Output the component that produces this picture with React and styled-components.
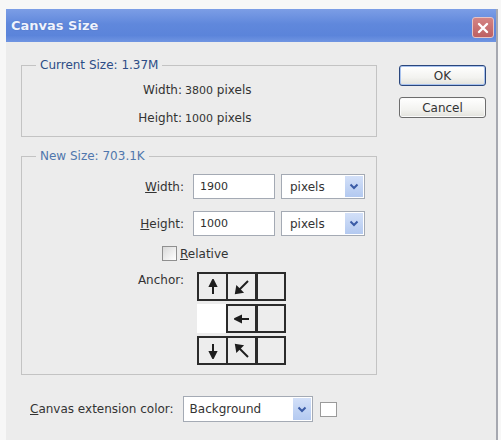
import React from "react";
import styled, { createGlobalStyle } from "styled-components";

const GlobalStyle = createGlobalStyle`
  * { box-sizing: border-box; }
  html, body { margin: 0; padding: 0; background: #f7f7f7; }
  body {
    font-family: "DejaVu Sans", "Liberation Sans", sans-serif;
    font-size: 12px;
    color: #333333;
  }
`;

const Page = styled.div`
  width: 501px;
  height: 440px;
  overflow: hidden;
  padding: 9px 0 0 6px;
  background: #f7f7f7;
`;

const Window = styled.div`
  width: 492px;
  height: 431px;
  display: flex;
  flex-direction: column;
  border-right: 2px solid #a6a8b0;
  background: #ececec;
`;

const TitleBar = styled.div`
  height: 33px;
  flex: none;
  display: flex;
  align-items: flex-start;
  justify-content: space-between;
  padding: 0 2px 0 5px;
  background: linear-gradient(#7c9ee6, #6088dc 45%, #5b84da 80%, #7095e2);
`;

const Title = styled.span`
  font: bold 13px/33px "DejaVu Sans", sans-serif;
  color: #eef3ff;
  text-shadow: 0 0 1px rgba(40, 60, 120, 0.5);
`;

const CloseButton = styled.button`
  margin-top: 8px;
  width: 22px;
  height: 21px;
  padding: 0;
  border: 1px solid #e7c3c3;
  border-radius: 3px;
  background: linear-gradient(#d48484, #bd6062);
  display: grid;
  place-items: center;
`;

const Body = styled.div`
  flex: 1;
  display: flex;
  align-items: flex-start;
  gap: 22px;
  padding: 15px 0 0 15px;
`;

const Main = styled.div`
  width: 356px;
  display: flex;
  flex-direction: column;
`;

const Group = styled.fieldset`
  margin: ${(p) => p.$mt || 0}px 0 0;
  padding: ${(p) => p.$pad};
  min-width: 0;
  border: 1px solid #c3c3c3;
`;

const Legend = styled.legend`
  margin-left: 14px;
  padding: 0 4px;
  line-height: 16px;
  font-size: 12px;
  color: ${(p) => (p.$tone === "light" ? "#5077ad" : "#2d4c86")};
`;

const InfoGrid = styled.div`
  display: grid;
  grid-template-columns: 160px auto;
  column-gap: 3px;
  grid-auto-rows: 28px;
  align-items: center;
`;

const Label = styled.span`
  text-align: right;
  white-space: nowrap;
`;

const Value = styled.span`
  white-space: nowrap;
`;

const Number = styled.span`
  font-size: 11px;
`;

const FormRow = styled.div`
  display: flex;
  align-items: ${(p) => p.$align || "center"};
  gap: ${(p) => (p.$gap != null ? p.$gap : 9)}px;
  margin-top: ${(p) => p.$mt || 0}px;
  padding-left: ${(p) => p.$pl || 0}px;
`;

const FieldLabel = styled.label`
  width: 162px;
  flex: none;
  text-align: right;
  line-height: 16px;
  white-space: nowrap;
`;

const Mnemonic = styled.span`
  text-decoration: underline;
`;

const TextInput = styled.input`
  width: 82px;
  height: 25px;
  border: 1px solid #a4aab4;
  background: #fff;
  padding: 0 0 0 6px;
  margin: 0;
  font: 11px "DejaVu Sans", sans-serif;
  color: #2e2e2e;
  outline: none;
`;

const Select = styled.div`
  width: ${(p) => p.$w}px;
  height: ${(p) => p.$h}px;
  margin-left: ${(p) => p.$ml || 0}px;
  border: 1px solid #a4aab4;
  background: #fff;
  display: flex;
  align-items: stretch;
  flex: none;
`;

const SelectText = styled.span`
  flex: 1;
  display: flex;
  align-items: center;
  padding-left: ${(p) => p.$pl || 8}px;
`;

const SelectArrow = styled.span`
  width: 18px;
  margin: 1px;
  background: linear-gradient(#d3e0f8, #b3c9f0);
  display: grid;
  place-items: center;
`;

const CheckBox = styled.span`
  width: 15px;
  height: 15px;
  flex: none;
  border: 1px solid #8f8f8f;
  background: linear-gradient(135deg, #d9d9d9, #ffffff);
`;

const AnchorGrid = styled.div`
  margin-left: 4px;
  display: flex;
  flex-direction: column;
  gap: 3px;
`;

const AnchorRow = styled.div`
  display: flex;
`;

const AnchorCell = styled.div`
  width: 31px;
  height: 29px;
  display: grid;
  place-items: center;
  border: 2px solid ${(p) => (p.$selected ? "transparent" : "#2b2b2b")};
  border-left-width: ${(p) => (p.$thick ? 3 : 2)}px;
  background: ${(p) => (p.$selected ? "#ffffff" : "#ededed")};
  & + & {
    margin-left: -2px;
  }
`;

const ExtensionRow = styled.div`
  margin-top: 21px;
  padding-left: 9px;
  display: flex;
  align-items: center;
`;

const Swatch = styled.span`
  width: 17px;
  height: 15px;
  margin-left: 7px;
  border: 1px solid #9a9a9a;
  background: #fff;
`;

const Actions = styled.div`
  margin-top: 8px;
  width: 87px;
  display: flex;
  flex-direction: column;
  gap: 11px;
`;

const Button = styled.button`
  height: 21px;
  padding: 0;
  font: 12px "DejaVu Sans", sans-serif;
  color: #333;
  border-radius: 3px;
  border: 1px solid ${(p) => (p.$primary ? "#2a467c" : "#6d6d6d")};
  background: linear-gradient(#ffffff, #f3f3f0 60%, #e2e2dc);
  box-shadow: ${(p) =>
    p.$primary ? "inset 0 0 0 1px #a8c2ee" : "inset 0 0 0 1px #fafafa"};
`;

const arrows = {
  up: (
    <>
      <line x1="8" y1="15" x2="8" y2="5" />
      <polygon points="8,1 5,7 11,7" />
    </>
  ),
  down: (
    <>
      <line x1="8" y1="1" x2="8" y2="11" />
      <polygon points="8,15 5,9 11,9" />
    </>
  ),
  left: (
    <>
      <line x1="15" y1="8" x2="5" y2="8" />
      <polygon points="1,8 7,5 7,11" />
    </>
  ),
  downLeft: (
    <>
      <line x1="14" y1="2" x2="5" y2="11" />
      <polygon points="2,14 3,8 8,13" />
    </>
  ),
  upLeft: (
    <>
      <line x1="14" y1="14" x2="5" y2="5" />
      <polygon points="2,2 8,3 3,8" />
    </>
  ),
};

function Arrow({ dir }) {
  return (
    <svg width="16" height="16" viewBox="0 0 16 16" stroke="#1e1e1e" strokeWidth="2" fill="#1e1e1e">
      {arrows[dir]}
    </svg>
  );
}

function Chevron() {
  return (
    <svg width="10" height="7" viewBox="0 0 10 7">
      <path d="M1.5 1.5 L5 5 L8.5 1.5" fill="none" stroke="#3a5ba6" strokeWidth="2" />
    </svg>
  );
}

const anchorLayout = [
  [{ dir: "up" }, { dir: "downLeft" }, { thick: true }],
  [{ selected: true }, { dir: "left" }, { thick: true }],
  [{ dir: "down" }, { dir: "upLeft" }, { thick: true }],
];

function UnitSelect() {
  return (
    <Select $w={84} $h={25} $ml={-3}>
      <SelectText>pixels</SelectText>
      <SelectArrow>
        <Chevron />
      </SelectArrow>
    </Select>
  );
}

export default function App() {
  return (
    <>
      <GlobalStyle />
      <Page>
        <Window>
          <TitleBar>
            <Title>Canvas Size</Title>
            <CloseButton aria-label="Close">
              <svg width="12" height="12" viewBox="0 0 12 12">
                <path d="M2 2 L10 10 M10 2 L2 10" stroke="#fff" strokeWidth="2.4" strokeLinecap="round" />
              </svg>
            </CloseButton>
          </TitleBar>
          <Body>
            <Main>
              <Group $pad="3px 0 4px">
                <Legend>Current Size: 1.37M</Legend>
                <InfoGrid>
                  <Label>Width:</Label>
                  <Value>
                    <Number>3800</Number> pixels
                  </Value>
                  <Label>Height:</Label>
                  <Value>
                    <Number>1000</Number> pixels
                  </Value>
                </InfoGrid>
              </Group>

              <Group $mt={11} $pad="10px 0 9px">
                <Legend $tone="light">New Size: 703.1K</Legend>
                <FormRow>
                  <FieldLabel>
                    <Mnemonic>W</Mnemonic>idth:
                  </FieldLabel>
                  <TextInput readOnly value="1900" />
                  <UnitSelect />
                </FormRow>
                <FormRow $mt={12}>
                  <FieldLabel>
                    <Mnemonic>H</Mnemonic>eight:
                  </FieldLabel>
                  <TextInput readOnly value="1000" />
                  <UnitSelect />
                </FormRow>
                <FormRow $mt={10} $pl={140} $gap={3}>
                  <CheckBox />
                  <span>
                    <Mnemonic>R</Mnemonic>elative
                  </span>
                </FormRow>
                <FormRow $mt={11} $align="flex-start">
                  <FieldLabel>Anchor:</FieldLabel>
                  <AnchorGrid>
                    {anchorLayout.map((row, r) => (
                      <AnchorRow key={r}>
                        {row.map((cell, c) => (
                          <AnchorCell key={c} $selected={cell.selected} $thick={cell.thick}>
                            {cell.dir && <Arrow dir={cell.dir} />}
                          </AnchorCell>
                        ))}
                      </AnchorRow>
                    ))}
                  </AnchorGrid>
                </FormRow>
              </Group>

              <ExtensionRow>
                <span>
                  <Mnemonic>C</Mnemonic>anvas extension color:
                </span>
                <Select $w={130} $h={26} $ml={9}>
                  <SelectText $pl={6}>Background</SelectText>
                  <SelectArrow>
                    <Chevron />
                  </SelectArrow>
                </Select>
                <Swatch />
              </ExtensionRow>
            </Main>
            <Actions>
              <Button $primary>OK</Button>
              <Button>Cancel</Button>
            </Actions>
          </Body>
        </Window>
      </Page>
    </>
  );
}
